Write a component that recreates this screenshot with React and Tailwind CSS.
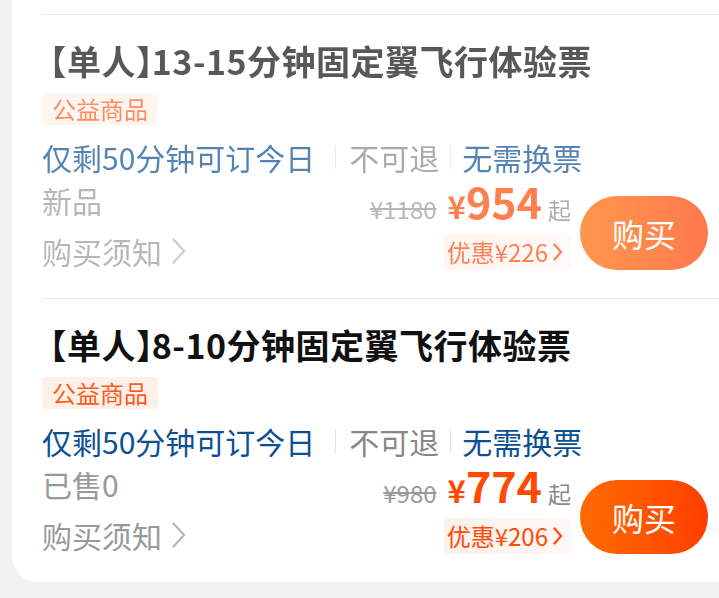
const ITEMS = [
  {
    title: "13-15分钟固定翼飞行体验票",
    sub: "新品",
    original: "¥1180",
    price: "954",
    save: "优惠¥226",
    faded: true,
  },
  {
    title: "8-10分钟固定翼飞行体验票",
    sub: "已售0",
    original: "¥980",
    price: "774",
    save: "优惠¥206",
    faded: false,
  },
];

function Chevron({ w, h, className }) {
  return (
    <svg width={w} height={h} viewBox={`0 0 ${w} ${h}`} className={className} fill="none">
      <polyline
        points={`1.5,1.5 ${w - 2},${h / 2} 1.5,${h - 1.5}`}
        stroke="currentColor"
        strokeWidth="2.2"
        strokeLinecap="round"
        strokeLinejoin="round"
      />
    </svg>
  );
}

function TicketRow({ item }) {
  return (
    <div className="border-t border-[#e9e9e9] pt-[26px] pb-[27px] pr-[11px]">
      <div className={item.faded ? "opacity-70" : ""}>
        <h3 className="text-[34px] leading-[40px] font-bold tracking-[0.5px] text-[#111]">
          <span className="-ml-[0.28em]">【</span>单人<span className="-mr-[0.55em]">】</span>
          {item.title}
        </h3>
        <div className="mt-[12px] flex">
          <span className="flex h-[32px] items-center rounded-[5px] bg-[#fff1e8] px-[10px] text-[24px] text-[#ff5a1f]">
            公益商品
          </span>
        </div>
        <div className="mt-[12px] flex items-center text-[30px] leading-[40px]">
          <span className="text-[#0b4f94]">仅剩50分钟可订今日</span>
          <span className="ml-[20px] mr-[13px] h-[24px] w-px bg-[#e2e2e2]" />
          <span className="text-[#888]">不可退</span>
          <span className="mx-[11px] h-[24px] w-px bg-[#e2e2e2]" />
          <span className="text-[#0b4f94]">无需换票</span>
        </div>
        <div className="flex items-start">
          <div className="flex-1 text-[30px] leading-[40px] text-[#999]">
            <p className="mt-[3px]">{item.sub}</p>
            <p className="mt-[11px] flex items-center">
              购买须知
              <Chevron w={14} h={26} className="ml-[10px] text-[#b5b5b5]" />
            </p>
          </div>
          <div className="flex flex-col items-end">
            <div className="flex items-baseline leading-[46px]">
              <span className="text-[24px] text-[#999] line-through">{item.original}</span>
              <span className="ml-[11px] text-[31px] font-bold text-[#ff4a00]">¥</span>
              <span className="text-[43px] font-bold text-[#ff4a00]">{item.price}</span>
              <span className="ml-[6px] text-[23px] text-[#888]">起</span>
            </div>
            <div className="mt-[2px] flex h-[36px] items-center rounded-[4px] bg-gradient-to-r from-[#fff1eb] to-[#fff8f5] pl-[3px] pr-[8px] text-[24px] text-[#ff4a0a]">
              {item.save}
              <Chevron w={10} h={18} className="ml-[5px]" />
            </div>
          </div>
          <button className="mt-[19px] ml-[9px] flex h-[74px] w-[128px] items-center justify-center rounded-full bg-gradient-to-r from-[#ff6a00] to-[#ff3d00] text-[32px] text-white">
            购买
          </button>
        </div>
      </div>
    </div>
  );
}

export default function App() {
  return (
    <div
      className="h-[598px] w-[719px] overflow-hidden bg-[#f2f2f2] pl-[12px]"
      style={{ fontFamily: '"Noto Sans CJK SC", "Noto Sans", sans-serif' }}
    >
      <div className="rounded-bl-[26px] bg-white pl-[30px] pt-[14px]">
        {ITEMS.map((item, i) => (
          <TicketRow key={i} item={item} />
        ))}
      </div>
    </div>
  );
}
